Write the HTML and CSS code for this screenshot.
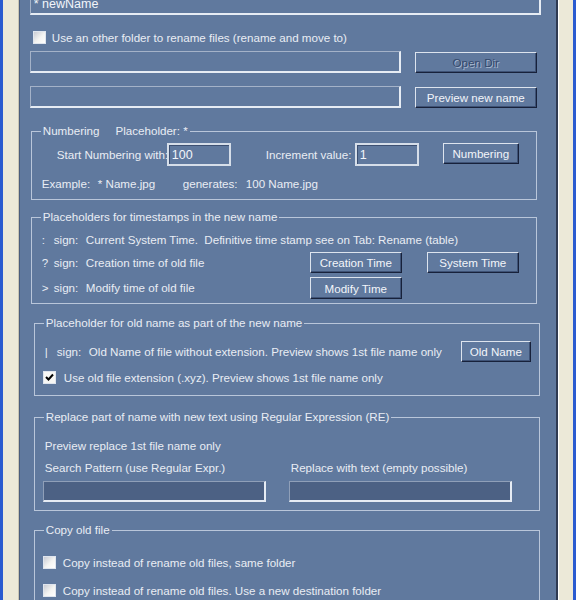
FILE: index.html
```html
<!DOCTYPE html>
<html lang="en">

<head>
    <meta charset="UTF-8">
    <title>Rename Options</title>
    <link rel="stylesheet" href="styles.css">
</head>

<body>
    <div class="window">
        <div class="edge-blue"></div>
        <div class="edge-beige"></div>

        <main class="panel">
            <input type="text" class="field name-field" value="* newName">

            <label class="check-row top-check">
                <span class="checkbox"></span>
                <span>Use an other folder to rename files (rename and move to)</span>
            </label>

            <div class="path-row">
                <input type="text" class="field path-field">
                <button class="btn wide-btn" disabled>Open Dir</button>
            </div>

            <div class="path-row second">
                <input type="text" class="field path-field">
                <button class="btn wide-btn">Preview new name</button>
            </div>

            <!-- Numbering -->
            <fieldset class="group numbering">
                <legend><span>Numbering</span><span class="placeholder">Placeholder: *</span></legend>
                <div class="num-row">
                    <span class="start-label">Start Numbering with:</span>
                    <input type="text" class="field num-field" value="100">
                    <span class="inc-label">Increment value:</span>
                    <input type="text" class="field num-field" value="1">
                    <button class="btn num-btn">Numbering</button>
                </div>
                <div class="example-row">
                    <span class="ex-a">Example:</span>
                    <span class="ex-b">* Name.jpg</span>
                    <span class="ex-c">generates:</span>
                    <span>100 Name.jpg</span>
                </div>
            </fieldset>

            <!-- Timestamps -->
            <fieldset class="group stamps">
                <legend>Placeholders for timestamps in the new name</legend>
                <div class="sign-row first">
                    <span class="mark">:</span><span class="sign">sign:</span>
                    <span>Current System Time.&nbsp;&nbsp;Definitive time stamp see on Tab: Rename (table)</span>
                </div>
                <div class="sign-row btn-row">
                    <span class="mark">?</span><span class="sign">sign:</span>
                    <span class="desc">Creation time of old file</span>
                    <button class="btn time-btn">Creation Time</button>
                    <button class="btn time-btn sys">System Time</button>
                </div>
                <div class="sign-row btn-row last">
                    <span class="mark">&gt;</span><span class="sign">sign:</span>
                    <span class="desc">Modify time of old file</span>
                    <button class="btn time-btn">Modify Time</button>
                </div>
            </fieldset>

            <!-- Old name -->
            <fieldset class="group inset oldname">
                <legend>Placeholder for old name as part of the new name</legend>
                <div class="sign-row old-row">
                    <span class="mark">|</span><span class="sign">sign:</span>
                    <span class="desc-long">Old Name of file without extension. Preview shows 1st file name only</span>
                    <button class="btn old-btn">Old Name</button>
                </div>
                <label class="check-row ext-row">
                    <span class="checkbox checked">
                        <svg width="9" height="9" viewBox="0 0 9 9"><path d="M1 4 L3.5 6.5 L8 1.5" fill="none" stroke="#000" stroke-width="2"/></svg>
                    </span>
                    <span>Use old file extension (.xyz). Preview shows 1st file name only</span>
                </label>
            </fieldset>

            <!-- Regular expression -->
            <fieldset class="group inset regex">
                <legend>Replace part of name with new text using Regular Expression (RE)</legend>
                <div class="text-line preview-line">Preview replace 1st file name only</div>
                <div class="re-grid">
                    <span>Search Pattern (use Regular Expr.)</span>
                    <span class="re-right">Replace with text (empty possible)</span>
                    <input type="text" class="field dark-field">
                    <input type="text" class="field dark-field">
                </div>
            </fieldset>

            <!-- Copy -->
            <fieldset class="group inset copy">
                <legend>Copy old file</legend>
                <label class="check-row copy-row">
                    <span class="checkbox"></span>
                    <span>Copy instead of rename old files, same folder</span>
                </label>
                <label class="check-row copy-row second">
                    <span class="checkbox"></span>
                    <span>Copy instead of rename old files. Use a new destination folder</span>
                </label>
            </fieldset>
        </main>

        <div class="edge-beige right"></div>
        <div class="edge-blue"></div>
    </div>
</body>

</html>
```

FILE: styles.css
```css
body {
    margin: 0;
    padding: 0;
    font-family: "Liberation Sans", Arial, sans-serif;
    font-size: 11.6px;
    color: #e9edf4;
    overflow: hidden;
}

.window {
    display: flex;
    height: 600px;
    overflow: hidden;
}

.edge-blue {
    width: 3px;
    background-color: #2a5bd0;
}

.edge-beige {
    width: 15px;
    background-color: #ece9d8;
    border-right: 1px solid #c9c5b4;
}

.edge-beige.right {
    width: 14px;
    border-right: none;
    border-left: 1px solid #ffffff;
}

.panel {
    width: 533px;
    background-color: #60799e;
    border-left: 1px solid #4a5d7c;
    border-right: 2px solid #2e3a52;
    padding-left: 10px;
    white-space: nowrap;
}

/* text fields */

.field {
    box-sizing: border-box;
    height: 22px;
    margin: 0;
    padding: 0 3px;
    background-color: #60799e;
    color: #f2f5fa;
    font-family: inherit;
    font-size: 12.5px;
    border: 1px solid #a4b2c8;
    border-right: 2px solid #e6ecf4;
    border-bottom: 2px solid #e6ecf4;
    outline: none;
}

.name-field {
    display: block;
    width: 511px;
    margin-top: -7px;
}

.path-field {
    width: 371px;
}

.num-field {
    width: 64px;
    height: 23px;
    border: 2px solid #d6dee9;
    box-shadow: inset 1px 1px 0 #3d5072;
}

.dark-field {
    width: 223px;
    height: 21px;
    background-color: #4c6184;
    border-color: #8f9fb8;
    border-right-color: #e6ecf4;
    border-bottom-color: #e6ecf4;
}

/* buttons */

.btn {
    box-sizing: border-box;
    height: 21px;
    padding: 0;
    background-color: #60799e;
    color: #f2f5fa;
    font-family: inherit;
    font-size: 11.6px;
    border: 1px solid #dde4ee;
    border-right-color: #17213a;
    border-bottom-color: #17213a;
    box-shadow: inset -1px -1px 0 #3e5276;
    cursor: pointer;
}

.btn:disabled {
    color: #34486b;
    text-shadow: 1px 1px 0 #a9b8cf;
}

.wide-btn {
    width: 122px;
    margin-left: 14px;
}

/* checkboxes */

.check-row {
    display: flex;
    align-items: center;
    height: 14px;
}

.checkbox {
    box-sizing: border-box;
    width: 13px;
    height: 13px;
    margin-right: 7px;
    display: flex;
    align-items: center;
    justify-content: center;
    background: linear-gradient(135deg, #c9ccd4 0%, #f4f4f2 55%, #ffffff 100%);
    border: 1px solid #dfe5ee;
}

.checkbox.checked {
    background: #f7f7f5;
}

.top-check {
    margin-top: 15px;
    margin-left: 3px;
}

.top-check .checkbox {
    margin-right: 6px;
}

.path-row {
    display: flex;
    align-items: center;
    margin-top: 7px;
    height: 22px;
}

.path-row.second {
    margin-top: 13px;
}

/* group boxes */

.group {
    margin: 0;
    padding: 0 0 0 10px;
    border: 1px solid #b9c6da;
    min-width: 0;
}

.group legend {
    padding: 0 2px;
    margin-left: -1px;
    line-height: 14px;
    height: 14px;
}

.numbering {
    width: 494px;
    margin: 16px 0 0 1px;
    padding-bottom: 8px;
}

.numbering .placeholder {
    margin-left: 16px;
}

.num-row {
    display: flex;
    align-items: center;
    margin-top: 5px;
    height: 23px;
}

.start-label {
    width: 110px;
    margin-left: 15px;
}

.inc-label {
    width: 89px;
    margin-left: 35px;
}

.num-btn {
    width: 76px;
    margin-left: 24px;
    margin-top: -2px;
}

.example-row {
    display: flex;
    margin-top: 11px;
    line-height: 14px;
}

.ex-a {
    width: 56px;
}

.ex-b {
    width: 85px;
}

.ex-c {
    width: 63px;
}

/* timestamp rows */

.stamps {
    width: 494px;
    margin: 10px 0 0 1px;
    padding-bottom: 4px;
}

.sign-row {
    display: flex;
    align-items: center;
    line-height: 14px;
}

.sign-row.first {
    margin-top: 9px;
}

.mark {
    width: 12px;
}

.sign {
    width: 32px;
}

.btn-row {
    margin-top: 5px;
    height: 21px;
}

.btn-row.last {
    margin-top: 4px;
    height: 22px;
}

.desc {
    width: 224px;
}

.time-btn {
    width: 92px;
}

.btn-row.last .time-btn {
    height: 22px;
}

.time-btn.sys {
    margin-left: 25px;
}

/* old name */

.inset {
    width: 494px;
    margin: 12px 0 0 4px;
}

.old-row {
    margin-top: 11px;
    height: 21px;
}

.desc-long {
    width: 372px;
}

.old-btn {
    width: 70px;
}

.ext-row {
    margin-top: 8px;
    margin-bottom: 11px;
}

.ext-row .checkbox {
    margin-left: -2px;
    margin-right: 8px;
}

/* regular expression */

.regex {
    margin-top: 14px;
    padding-bottom: 8px;
}

.preview-line {
    margin-top: 15px;
    line-height: 14px;
}

.re-grid {
    display: grid;
    grid-template-columns: 246px 223px;
    row-gap: 6px;
    margin-top: 8px;
    line-height: 14px;
}

.re-grid .dark-field {
    margin-left: -2px;
}

/* copy */

.copy {
    margin-top: 12px;
    height: 120px;
}

.copy-row {
    margin-top: 18px;
}

.copy-row.second {
    margin-top: 14px;
}

.copy-row .checkbox {
    margin-left: -2px;
    margin-right: 7px;
}
```
